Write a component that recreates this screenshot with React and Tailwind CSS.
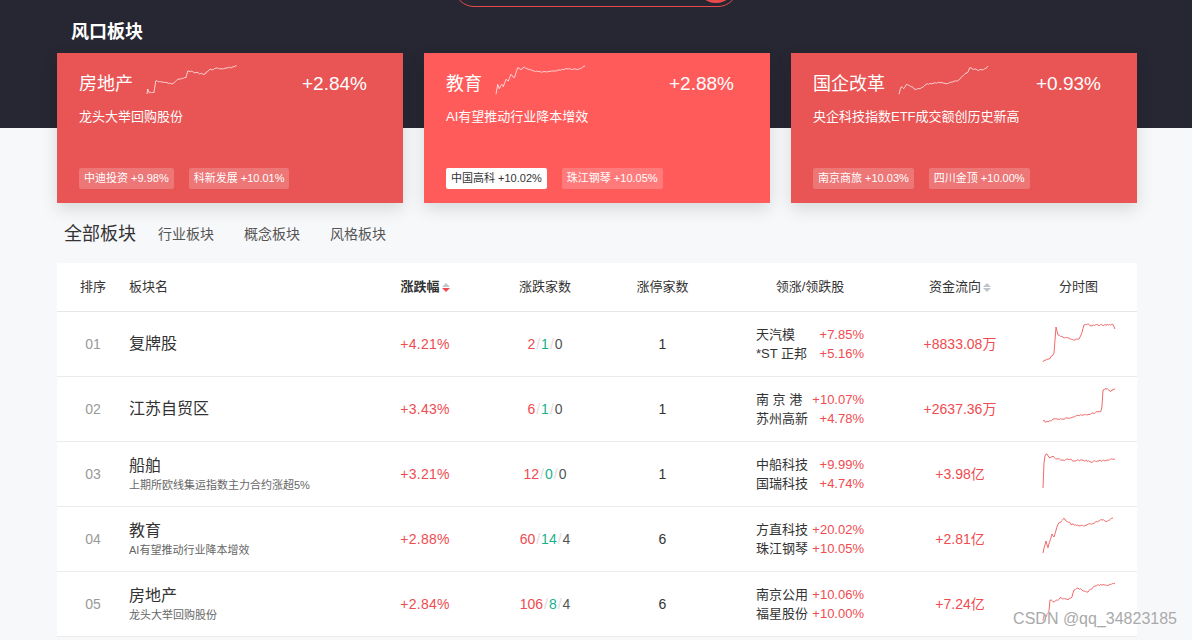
import React from 'react';

// tiny seeded random so the sparklines look jagged but stay the same every render
function makeRand(seed) {
  let s = seed;
  return () => {
    s = (s * 16807) % 2147483647;
    return (s - 1) / 2147483646;
  };
}

function jaggedPoints(keys, seed, amp) {
  const rand = makeRand(seed);
  const pts = [];
  for (let i = 0; i < keys.length - 1; i++) {
    const [x0, y0] = keys[i];
    const [x1, y1] = keys[i + 1];
    const n = Math.max(1, Math.round((x1 - x0) / 1.2));
    for (let k = 0; k < n; k++) {
      const t = k / n;
      const jitter = k === 0 ? 0 : (rand() - 0.5) * amp;
      pts.push(`${(x0 + (x1 - x0) * t).toFixed(1)},${(y0 + (y1 - y0) * t + jitter).toFixed(1)}`);
    }
  }
  const last = keys[keys.length - 1];
  pts.push(`${last[0]},${last[1]}`);
  return pts.join(' ');
}

const Spark = ({ keys, seed, w, h, color, amp = 1.6 }) => (
  <svg width={w} height={h} viewBox={`0 0 ${w} ${h}`} className="block overflow-visible">
    <polyline
      points={jaggedPoints(keys, seed, amp)}
      fill="none"
      stroke={color}
      strokeWidth="1"
      strokeLinejoin="round"
    />
  </svg>
);

const hotCards = [
  {
    name: '房地产',
    pct: '+2.84%',
    desc: '龙头大举回购股份',
    bg: 'bg-[#e95454]',
    tags: [
      { text: '中迪投资 +9.98%' },
      { text: '科新发展 +10.01%' },
    ],
    spark: [[0, 28], [0.7, 23], [2.3, 27], [7, 26.6], [8.7, 15], [15, 16], [25, 18], [32, 13], [39, 11.7], [40.7, 5], [49, 6.7], [57, 8.3], [62, 4], [69, 2.3], [79, 2.3], [89.6, 0]],
  },
  {
    name: '教育',
    pct: '+2.88%',
    desc: 'AI有望推动行业降本增效',
    bg: 'bg-[#ff5b5b]',
    tags: [
      { text: '中国高科 +10.02%', light: true },
      { text: '珠江钢琴 +10.05%' },
    ],
    spark: [[0, 28.3], [1.7, 18.3], [3.3, 22.7], [6, 18.3], [7.3, 20.7], [10, 13.3], [12.3, 15], [15, 8.3], [18.3, 11.7], [21.7, 1.7], [25, 3.3], [28.3, 1], [33.3, 3.3], [36.7, 5], [46.7, 6], [56.7, 5], [63.3, 4], [70, 2.7], [76.7, 3.3], [83.3, 2.7], [89, 0]],
  },
  {
    name: '国企改革',
    pct: '+0.93%',
    desc: '央企科技指数ETF成交额创历史新高',
    bg: 'bg-[#e95454]',
    tags: [
      { text: '南京商旅 +10.03%' },
      { text: '四川金顶 +10.00%' },
    ],
    spark: [[0, 28.3], [2.3, 20.7], [4.7, 22.7], [7.3, 18.3], [12.3, 20.7], [17.3, 23.3], [22.3, 21.7], [27.3, 18.3], [34, 17.3], [40.7, 16.7], [47.3, 17.7], [54, 16], [60.7, 13.3], [65.7, 8.3], [69, 6], [70.7, 1.7], [75.7, 3.3], [80.7, 4], [85.7, 2.7], [89, 0]],
  },
];

const rows = [
  {
    rank: '01',
    name: '复牌股',
    pct: '+4.21%',
    counts: ['2', '1', '0'],
    limit: '1',
    leaders: [['天汽模', '+7.85%'], ['*ST 正邦', '+5.16%']],
    flow: '+8833.08万',
    spark: [[0, 39], [3, 37], [6, 36], [9, 33], [11, 30], [13, 4], [15, 12], [20, 14], [26, 15], [32, 17], [36, 16], [38, 12], [41, 2], [55, 2], [70, 1.5], [72, 6]],
  },
  {
    rank: '02',
    name: '江苏自贸区',
    pct: '+3.43%',
    counts: ['6', '1', '0'],
    limit: '1',
    leaders: [['南 京 港', '+10.07%'], ['苏州高新', '+4.78%']],
    flow: '+2637.36万',
    spark: [[0, 33], [5, 34], [10, 31], [20, 31], [30, 29], [40, 27], [50, 25], [55, 24], [58, 23], [59, 18], [60, 2], [63, 1], [67, 3], [70, 2], [72, 1]],
  },
  {
    rank: '03',
    name: '船舶',
    sub: '上期所欧线集运指数主力合约涨超5%',
    pct: '+3.21%',
    counts: ['12', '0', '0'],
    limit: '1',
    leaders: [['中船科技', '+9.99%'], ['国瑞科技', '+4.74%']],
    flow: '+3.98亿',
    spark: [[0, 35], [1, 10], [2, 3], [4, 1], [7, 5], [10, 3], [14, 6], [20, 7], [25, 6], [32, 8], [40, 7], [48, 9], [56, 8], [64, 7], [72, 6]],
  },
  {
    rank: '04',
    name: '教育',
    sub: 'AI有望推动行业降本增效',
    pct: '+2.88%',
    counts: ['60', '14', '4'],
    limit: '6',
    leaders: [['方直科技', '+20.02%'], ['珠江钢琴', '+10.05%']],
    flow: '+2.81亿',
    spark: [[0, 35], [3, 23], [5, 29.7], [9, 16], [11, 19], [15, 6.3], [20.7, 0.3], [24.6, 3.7], [29, 6.3], [36, 8], [44, 7], [52, 4.7], [58, 1.3], [64, 3.7], [70, 0]],
  },
  {
    rank: '05',
    name: '房地产',
    sub: '龙头大举回购股份',
    pct: '+2.84%',
    counts: ['106', '8', '4'],
    limit: '6',
    leaders: [['南京公用', '+10.06%'], ['福星股份', '+10.00%']],
    flow: '+7.24亿',
    spark: [[0, 38], [1, 32], [3, 34], [6, 28], [7, 17], [11, 19], [17, 15], [25, 17], [29, 14], [31, 7], [35, 5], [40, 8], [45, 9], [52, 3], [60, 1.5], [66, 2], [72, 0]],
  },
];

const cols = 'grid grid-cols-[72px_236px_120px_120px_115px_180px_120px_117px] items-center';

const SortIcon = ({ active }) => (
  <span className="ml-[2px] flex flex-col gap-[1px]">
    <span className="h-0 w-0 border-x-[4px] border-b-[4px] border-x-transparent border-b-[#c0c4cc]" />
    <span
      className={`h-0 w-0 border-x-[4px] border-t-[4px] border-x-transparent ${active ? 'border-t-[#ef4b50]' : 'border-t-[#c0c4cc]'}`}
    />
  </span>
);

const HotCard = ({ card, seed }) => (
  <div className={`h-[150px] w-[346px] pt-[13px] pl-[22px] pr-[36px] shadow-[0_6px_16px_rgba(0,0,0,0.13)] ${card.bg}`}>
    <div className="flex h-[30px] items-end text-white">
      <span className="text-[18px] leading-[24px]">{card.name}</span>
      <div className="ml-[14px]">
        <Spark keys={card.spark} seed={seed} w={90} h={30} color="rgba(255,255,255,0.72)" amp={1.4} />
      </div>
      <span className="ml-auto text-[19px] leading-[24px]">{card.pct}</span>
    </div>
    <div className="mt-[12px] text-[13px] leading-[18px] text-white">{card.desc}</div>
    <div className="mt-[42px] flex gap-[15px]">
      {card.tags.map((t) => (
        <span
          key={t.text}
          className={`flex h-[21px] items-center rounded-[2px] px-[5px] text-[11px] ${t.light ? 'bg-white text-[#333]' : 'bg-white/20 text-white'}`}
        >
          {t.text}
        </span>
      ))}
    </div>
  </div>
);

const Row = ({ row, seed }) => (
  <div className={`${cols} h-[65px] border-b border-[#ebebeb]`}>
    <div className="text-center text-[14px] text-[#999]">{row.rank}</div>
    <div>
      <div className="text-[16px] leading-[22px] text-[#333]">{row.name}</div>
      {row.sub && <div className="text-[11px] leading-[16px] text-[#666]">{row.sub}</div>}
    </div>
    <div className="text-center text-[14px] tracking-[0.3px] text-[#ef4b50]">{row.pct}</div>
    <div className="text-center text-[14px]">
      <span className="text-[#ef4b50]">{row.counts[0]}</span>
      <span className="px-[1px] text-[#dcdcdc]">/</span>
      <span className="text-[#17b08c]">{row.counts[1]}</span>
      <span className="px-[1px] text-[#dcdcdc]">/</span>
      <span className="text-[#555]">{row.counts[2]}</span>
    </div>
    <div className="text-center text-[14px] text-[#333]">{row.limit}</div>
    <div>
      <div className="mx-auto w-[108px] text-[13px] leading-[19px]">
        {row.leaders.map(([n, p]) => (
          <div key={n} className="flex justify-between">
            <span className="whitespace-pre text-[#333]">{n}</span>
            <span className="text-[#ef4b50]">{p}</span>
          </div>
        ))}
      </div>
    </div>
    <div className="text-center text-[14px] text-[#ef4b50]">{row.flow}</div>
    <div className="flex justify-center">
      <Spark keys={row.spark} seed={seed} w={72} h={42} color="#f06a6a" amp={1.8} />
    </div>
  </div>
);

export default function App() {
  return (
    <div className="relative h-[640px] overflow-hidden bg-[linear-gradient(to_bottom,#272733_128px,#f7f8fa_128px)] font-['Liberation_Sans','Noto_Sans_CJK_SC',sans-serif]">
      {/* search box, mostly scrolled off the top */}
      <div className="flex h-[7px] items-end justify-center overflow-hidden">
        <div className="relative h-[40px] w-[284px] shrink-0 rounded-[20px] border border-[#e64a4a]">
          <span className="absolute bottom-[3px] right-[1px] h-[40px] w-[40px] rounded-full bg-[#e94a4a]" />
        </div>
      </div>

      <div className="ml-[57px] w-[1080px]">
        <h2 className="mt-[13px] ml-[14px] text-[18px] font-bold leading-[24px] text-white">风口板块</h2>

        <div className="mt-[9px] flex gap-[21px]">
          {hotCards.map((c, i) => (
            <HotCard key={c.name} card={c} seed={11 + i * 7} />
          ))}
        </div>

        <div className="mt-[17px] flex h-[28px] items-center pl-[7px]">
          <span className="text-[18px] text-[#333]">全部板块</span>
          <span className="ml-[22px] text-[14px] text-[#555]">行业板块</span>
          <span className="ml-[30px] text-[14px] text-[#555]">概念板块</span>
          <span className="ml-[30px] text-[14px] text-[#555]">风格板块</span>
        </div>

        <div className="mt-[15px] bg-white">
          <div className={`${cols} h-[49px] border-b border-[#e6e6e6] text-[13px] text-[#333]`}>
            <div className="text-center">排序</div>
            <div>板块名</div>
            <div className="flex items-center justify-center font-bold">
              涨跌幅
              <SortIcon active />
            </div>
            <div className="text-center">涨跌家数</div>
            <div className="text-center">涨停家数</div>
            <div className="text-center">领涨/领跌股</div>
            <div className="flex items-center justify-center">
              资金流向
              <SortIcon />
            </div>
            <div className="text-center">分时图</div>
          </div>
          {rows.map((r, i) => (
            <Row key={r.rank} row={r} seed={101 + i * 13} />
          ))}
        </div>
      </div>

      <div className="absolute bottom-[9px] right-[15px] text-[16px] text-[#a9a9a9] [text-shadow:0_0_2px_#fff]">
        CSDN @qq_34823185
      </div>
    </div>
  );
}
